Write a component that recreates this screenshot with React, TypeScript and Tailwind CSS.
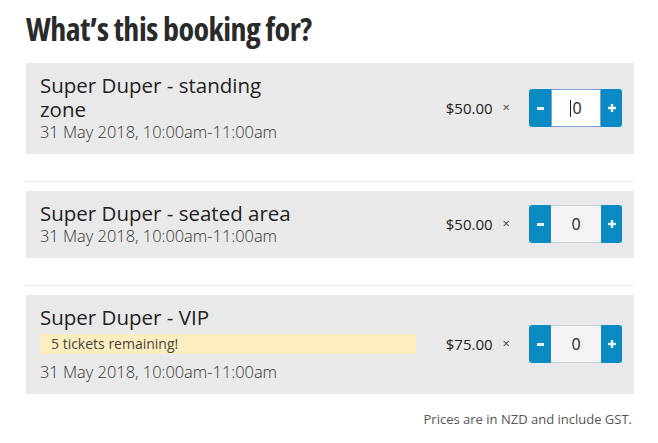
import React from 'react';

interface Ticket {
  name: string;
  date: string;
  price: string;
  remaining?: string;
  focused?: boolean;
}

const tickets: Ticket[] = [
  { name: 'Super Duper - standing zone', date: '31 May 2018, 10:00am-11:00am', price: '$50.00', focused: true },
  { name: 'Super Duper - seated area', date: '31 May 2018, 10:00am-11:00am', price: '$50.00' },
  { name: 'Super Duper - VIP', date: '31 May 2018, 10:00am-11:00am', price: '$75.00', remaining: '5 tickets remaining!' },
];

function Stepper({ focused }: { focused?: boolean }) {
  return (
    <div className="flex h-[38px]">
      <button className="w-[22px] rounded-l-[3px] bg-[#0b8bc3] flex items-center justify-center">
        <span className="block w-[7px] h-[3px] bg-white/90" />
      </button>
      <div
        className={
          focused
            ? 'w-[50px] bg-white border border-[#7f9fd8] flex items-center justify-center text-[16px] text-[#222]'
            : 'w-[50px] bg-[#f4f4f4] border-y border-[#cfcfcf] flex items-center justify-center text-[16px] text-[#222]'
        }
      >
        {focused ? (
          <span className="flex items-center">
            <span className="block w-px h-[17px] bg-[#222] mr-px" />0
          </span>
        ) : (
          '0'
        )}
      </div>
      <button className="w-[21px] rounded-r-[3px] bg-[#0b8bc3] flex items-center justify-center">
        <svg width="8" height="8" viewBox="0 0 8 8">
          <rect x="2.8" y="0" width="2.4" height="8" fill="white" fillOpacity="0.9" />
          <rect x="0" y="2.8" width="8" height="2.4" fill="white" fillOpacity="0.9" />
        </svg>
      </button>
    </div>
  );
}

export default function App() {
  return (
    <div className="w-[658px] h-[443px] bg-white px-[26px] pt-[9px]" style={{ fontFamily: '"Open Sans", "Liberation Sans", sans-serif' }}>
      <h1 className="text-[32px] leading-[40px] font-bold text-[#2a2a2a] tracking-[-0.5px] [font-stretch:condensed]">
        What’s this booking for?
      </h1>
      <div className="mt-[14px] w-[608px]">
        {tickets.map((t, i) => (
          <div key={t.name}>
            {i > 0 && <div className="pt-[27px] pb-[9px]"><div className="w-full border-t border-dotted border-[#d8d8d8]" /></div>}
            <div className="bg-[#e9e9e9] flex items-center pl-[14px] pr-[12px] pt-[10px] pb-[11px]">
              <div className="flex-1">
                <div className="max-w-[262px] text-[20.5px] leading-[24px] text-[#222]">{t.name}</div>
                {t.remaining && (
                  <div className="mt-[5px] mb-[7px] w-[376px] h-[20px] bg-[#fdeec0] pl-[11px] text-[14px] leading-[20px] text-[#444]">
                    {t.remaining}
                  </div>
                )}
                <div className="text-[16.4px] leading-[22px] font-light text-[#333]">{t.date}</div>
              </div>
              <div className="text-[15px] text-[#222] mr-[10px]">{t.price}</div>
              <div className="text-[13px] text-[#444] mr-[19px]">×</div>
              <Stepper focused={t.focused} />
            </div>
          </div>
        ))}
      </div>
      <div className="w-[608px] text-right pr-[2px] mt-[16px] text-[13px] text-[#555]">Prices are in NZD and include GST.</div>
    </div>
  );
}
